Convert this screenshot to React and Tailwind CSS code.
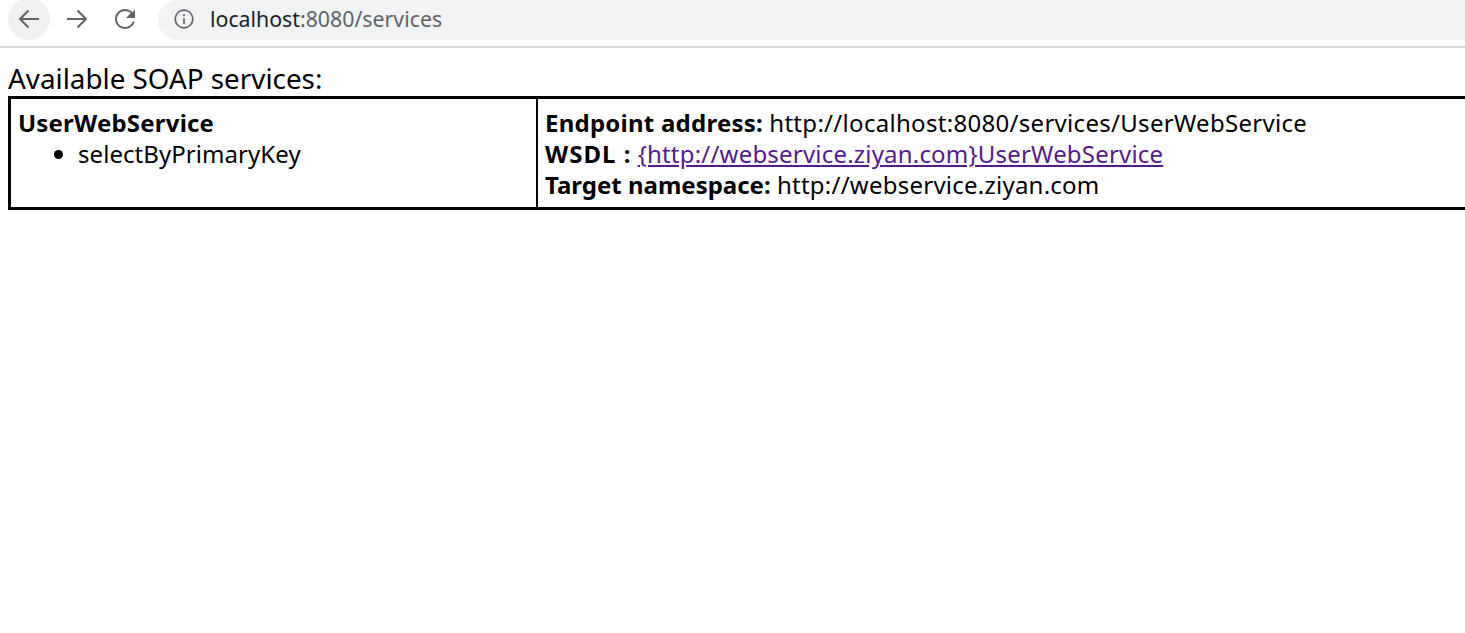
const sans = { fontFamily: '"Noto Sans", sans-serif' }

function BrowserBar() {
  return (
    <div className="h-[48px] border-b-2 border-[#dadce0] flex items-start overflow-hidden">
      <div className="w-[42px] h-[42px] -mt-[2px] ml-[8px] rounded-full bg-[#f1f1f2] flex items-center justify-center shrink-0">
        <svg width="24" height="24" viewBox="0 0 24 24" fill="none" stroke="#5f6368" strokeWidth="2">
          <path d="M22 12H3M11.500 3.500L3 12l8.500 8.500" />
        </svg>
      </div>
      <div className="w-[48px] h-[38px] ml-[3px] flex items-center justify-center shrink-0">
        <svg width="24" height="24" viewBox="0 0 24 24" fill="none" stroke="#5f6368" strokeWidth="2">
          <path d="M2 12h19M12.500 3.500L21 12l-8.500 8.500" />
        </svg>
      </div>
      <div className="w-[48px] h-[38px] flex items-center justify-center shrink-0">
        <svg width="24" height="24" viewBox="0 0 24 24" fill="#5f6368">
          <path d="M19.600 5.400C17.800 3.300 15.100 2 12 2 6.500 2 2 6.500 2 12s4.500 10 10 10c4.700 0 8.600-3.200 9.700-7.500h-2.100c-1 3.200-4 5.500-7.600 5.500-4.400 0-8-3.600-8-8s3.600-8 8-8c2.200 0 4.200.9 5.700 2.300L13 11h9V2l-2.400 3.400z" />
        </svg>
      </div>
      <div className="flex-1 h-[40px] ml-[9px] rounded-l-[20px] bg-[#f1f3f4] flex items-center pl-[15px]">
        <svg width="22" height="22" viewBox="0 0 20 20" fill="none" stroke="#5f6368" strokeWidth="1.500" className="shrink-0 -mt-[2px]">
          <circle cx="10" cy="10" r="8" />
          <path d="M10 9v5.500M10 5.500v2" />
        </svg>
        <span className="ml-[15px] text-[21.3px] leading-none text-[#5f6368] -mt-[2px]" style={sans}>
          <span className="text-[#202124]">localhost</span>:8080/services
        </span>
      </div>
    </div>
  )
}

export default function App() {
  return (
    <div className="min-h-[633px] w-[1465px] overflow-hidden bg-white text-black" style={sans}>
      <BrowserBar />
      <div className="pl-[8px] pt-[12px] text-[27.8px] leading-[36px]">Available SOAP services:</div>
      <div className="ml-[8px] w-[1480px] h-[114px] border-[3px] border-black flex text-[24px] leading-[31px]">
        <div className="w-[527px] border-r-2 border-black pl-[7px] pt-[8px] shrink-0">
          <div className="font-bold tracking-[0.2px]">UserWebService</div>
          <ul className="pl-[60px] list-disc">
            <li className="tracking-[0.06px]">selectByPrimaryKey</li>
          </ul>
        </div>
        <div className="flex-1 pl-[7px] pt-[8px]">
          <div>
            <span className="font-bold tracking-[0.24px]">Endpoint address:</span>{' '}
            <span className="tracking-[0.3px]">http://localhost:8080/services/UserWebService</span>
          </div>
          <div>
            <span className="font-bold tracking-[1px]">WSDL :</span>{' '}
            <a href="#wsdl" className="underline text-[#551a8b] tracking-[0.2px]">{'{http://webservice.ziyan.com}UserWebService'}</a>
          </div>
          <div>
            <span className="font-bold">Target namespace:</span>{' '}
            <span className="tracking-[0.24px]">http://webservice.ziyan.com</span>
          </div>
        </div>
      </div>
    </div>
  )
}
